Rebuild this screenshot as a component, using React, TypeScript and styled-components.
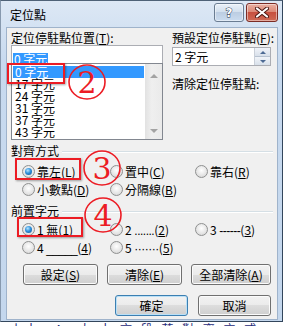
import * as React from "react"
import styled, { createGlobalStyle } from "styled-components"

const Global = createGlobalStyle`
  html, body { margin: 0; padding: 0; background: #fff; }
  body {
    font-family: "Noto Sans CJK TC", "Liberation Sans", sans-serif;
    font-size: 12px;
    color: #000;
  }
`

const Screen = styled.div`
  position: relative;
  width: 283px;
  height: 326px;
  overflow: hidden;
  background: #fff;
`

const Win = styled.div`
  height: 322px;
  box-sizing: border-box;
  display: flex;
  flex-direction: column;
  border-top: 1px solid #4f6277;
  border-left: 1px solid #8799ae;
  border-right: 1px solid #33465c;
  border-bottom: 1px solid #33465c;
  background: linear-gradient(#dde8f5, #c8daef 60px, #c4d7ed);
`

const TitleBar = styled.div`
  height: 26px;
  display: flex;
  align-items: flex-start;
  padding-left: 9px;
`

const Title = styled.div`
  margin-top: 6px;
  line-height: 16px;
  font-size: 12px;
`

const CaptionBtns = styled.div`
  margin-left: auto;
  margin-right: 4px;
  margin-top: 2px;
  display: flex;
  gap: 2px;
`

const CapBtn = styled.div<{ $close?: boolean }>`
  width: ${p => (p.$close ? 32 : 30)}px;
  height: 19px;
  box-sizing: border-box;
  border-radius: 3px;
  display: flex;
  align-items: center;
  justify-content: center;
  border: 1px solid ${p => (p.$close ? "#7b2c25" : "#6a7c92")};
  background: ${p =>
    p.$close
      ? "linear-gradient(#eab0a2, #dc8a78 45%, #c7503f 50%, #cf6a55)"
      : "linear-gradient(#eaf1f9, #d3e0ee 45%, #bccde2 50%, #cbdcef)"};
  box-shadow: inset 0 0 0 1px rgba(255, 255, 255, 0.45);
`

const Panel = styled.div`
  flex: 1;
  margin: 0 4px 1px 5px;
  background: #f0f0f0;
  border: 1px solid #9fb3cb;
  padding: 3px 4px 0 4px;
`

const Top = styled.div`
  display: grid;
  grid-template-columns: 152px 99px;
  column-gap: 9px;
`

const Col = styled.div`
  display: flex;
  flex-direction: column;
`

const Label = styled.div<{ $gap?: number }>`
  line-height: 14px;
  height: 14px;
  white-space: nowrap;
  margin-top: ${p => p.$gap ?? 0}px;
`

const EditBox = styled.div`
  height: 18px;
  box-sizing: border-box;
  border: 1px solid #abadb3;
  border-bottom: none;
  background: #fff;
  padding: 4px 0 0 1px;
`

const Sel = styled.span`
  display: inline-block;
  line-height: 11px;
  background: #3399ff;
  color: #fff;
  padding: 0 1px;
`

const ListBox = styled.div`
  height: 77px;
  box-sizing: border-box;
  border: 1px solid #828790;
  background: #fff;
  display: flex;
`

const Rows = styled.div`
  flex: 1;
  padding: 2px 1px 0 1px;
`

const Row = styled.div<{ $on?: boolean }>`
  height: 12px;
  line-height: 12px;
  padding-left: 2px;
  background: ${p => (p.$on ? "#3399ff" : "transparent")};
  color: ${p => (p.$on ? "#fff" : "#000")};
`

const ScrollBar = styled.div`
  width: 17px;
  background: linear-gradient(90deg, #e2e2e2, #efefef 40%, #eaeaea);
  display: flex;
  flex-direction: column;
  align-items: center;
  justify-content: space-between;
  padding: 10px 0 6px;
  box-sizing: border-box;
`

const Arrow = styled.div<{ $down?: boolean }>`
  width: 0;
  height: 0;
  border-left: 4px solid transparent;
  border-right: 4px solid transparent;
  ${p =>
    p.$down ? "border-top: 4px solid #a3a3a3;" : "border-bottom: 4px solid #a3a3a3;"}
`

const SpinBox = styled.div`
  margin-top: 2px;
  height: 19px;
  box-sizing: border-box;
  border: 1px solid #abadb3;
  background: #fff;
  display: flex;
`

const SpinText = styled.div`
  flex: 1;
  padding-left: 2px;
  line-height: 17px;
`

const SpinBtns = styled.div`
  width: 15px;
  display: flex;
  flex-direction: column;
  border-left: 1px solid #c9cfd8;
`

const SpinHalf = styled.div`
  flex: 1;
  display: flex;
  align-items: center;
  justify-content: center;
  background: linear-gradient(#f1f4f9, #d8e0ea);
  border-bottom: 1px solid #b7c2d0;
  &:last-child { border-bottom: none; }
`

const Tri = styled.div<{ $down?: boolean }>`
  width: 0;
  height: 0;
  border-left: 3px solid transparent;
  border-right: 3px solid transparent;
  ${p =>
    p.$down ? "border-top: 3px solid #4d6a93;" : "border-bottom: 3px solid #4d6a93;"}
`

const GroupHead = styled.div<{ $gap: number }>`
  display: flex;
  align-items: center;
  margin-top: ${p => p.$gap}px;
  height: 14px;
  line-height: 14px;
`

const Rule = styled.div`
  flex: 1;
  height: 1px;
  margin-left: 3px;
  background: #d5dfe5;
  box-shadow: 0 1px 0 #fff;
`

const RadioGrid = styled.div<{ $gap: number }>`
  display: grid;
  grid-template-columns: 88px 85px auto;
  grid-auto-rows: 18px;
  padding-left: 11px;
  margin-top: ${p => p.$gap}px;
`

const RadioItem = styled.div`
  display: flex;
  align-items: center;
  gap: 2px;
  white-space: nowrap;
`

const Circle = styled.div<{ $on?: boolean }>`
  width: 13px;
  height: 13px;
  box-sizing: border-box;
  border-radius: 50%;
  border: 1px solid #8f9090;
  background: radial-gradient(circle at 50% 40%, #ffffff, #e4e4e4 60%, #cfcfcf);
  display: flex;
  align-items: center;
  justify-content: center;
  &::after {
    content: "";
    display: ${p => (p.$on ? "block" : "none")};
    width: 7px;
    height: 7px;
    border-radius: 50%;
    background: radial-gradient(circle at 40% 35%, #b8e6ff, #2f91dc 45%, #0e4f8e);
  }
`

const Dots = styled.span`
  font-family: "Liberation Sans", sans-serif;
  letter-spacing: -0.5px;
`

const BtnRow = styled.div<{ $end?: boolean; $gap: number; $top: number }>`
  display: flex;
  gap: ${p => p.$gap}px;
  justify-content: ${p => (p.$end ? "flex-end" : "flex-start")};
  padding: 0 ${p => (p.$end ? 2 : 0)}px 0 ${p => (p.$end ? 0 : 12)}px;
  margin-top: ${p => p.$top}px;
`

const Btn = styled.div<{ $w: number; $def?: boolean }>`
  width: ${p => p.$w}px;
  height: 21px;
  box-sizing: border-box;
  border-radius: 3px;
  border: 1px solid ${p => (p.$def ? "#3c7fb1" : "#707070")};
  background: linear-gradient(#f2f2f2, #ebebeb 50%, #dddddd 50%, #cfcfcf);
  box-shadow: inset 0 0 0 1px ${p => (p.$def ? "#b9e0f7" : "#fbfbfb")};
  display: flex;
  align-items: center;
  justify-content: center;
  line-height: 14px;
`

const Doc = styled.div`
  height: 4px;
  overflow: hidden;
  padding-left: 10px;
  color: #1d2a78;
  line-height: 14px;
  letter-spacing: 3px;
`

const RedBox = styled.div<{ $x: number; $y: number; $w: number; $h: number }>`
  position: absolute;
  left: ${p => p.$x}px;
  top: ${p => p.$y}px;
  width: ${p => p.$w}px;
  height: ${p => p.$h}px;
  box-sizing: border-box;
  border: 2px solid #ec1c24;
  box-shadow: 1px 1px 2px rgba(0, 0, 0, 0.35);
`

const Mark = styled.svg<{ $x: number; $y: number }>`
  position: absolute;
  left: ${p => p.$x}px;
  top: ${p => p.$y}px;
  overflow: visible;
`

const Circled = ({ n, x, y }: { n: string; x: number; y: number }) => (
  <Mark $x={x} $y={y} width="38" height="36" viewBox="0 0 38 36">
    <ellipse cx="19" cy="18" rx="18" ry="17" fill="none" stroke="#ec1c24" strokeWidth="1.6" />
    <text
      x="19"
      y="29"
      textAnchor="middle"
      fontFamily="'DejaVu Serif', 'Liberation Serif', serif"
      fontSize="30"
      fill="#ec1c24"
    >
      {n}
    </text>
  </Mark>
)

const Radio = ({ on, children }: { on?: boolean; children: React.ReactNode }) => (
  <RadioItem>
    <Circle $on={on} />
    <span>{children}</span>
  </RadioItem>
)

const K = ({ c }: { c: string }) => (
  <>
    (<u>{c}</u>)
  </>
)

export default function App() {
  const stops = ["0 字元", "17 字元", "24 字元", "31 字元", "37 字元", "43 字元"]
  return (
    <Screen>
      <Global />
      <Win>
        <TitleBar>
          <Title>定位點</Title>
          <CaptionBtns>
            <CapBtn>
              <svg width="12" height="15" viewBox="0 0 12 15">
                <text
                  x="6"
                  y="12"
                  textAnchor="middle"
                  fontFamily="'DejaVu Sans', sans-serif"
                  fontWeight="bold"
                  fontSize="12"
                  fill="#fff"
                  stroke="#1f3048"
                  strokeWidth="0.9"
                  paintOrder="stroke"
                >
                  ?
                </text>
              </svg>
            </CapBtn>
            <CapBtn $close>
              <svg width="14" height="11" viewBox="0 0 14 11">
                <path d="M2 1.5 L12 9.5 M12 1.5 L2 9.5" stroke="#4a1610" strokeWidth="4" strokeLinecap="round" />
                <path d="M2 1.5 L12 9.5 M12 1.5 L2 9.5" stroke="#fff" strokeWidth="2.2" strokeLinecap="round" />
              </svg>
            </CapBtn>
          </CaptionBtns>
        </TitleBar>
        <Panel>
          <Top>
            <Col>
              <Label>
                定位停駐點位置<K c="T" />:
              </Label>
              <EditBox>
                <Sel>0 字元</Sel>
              </EditBox>
              <ListBox>
                <Rows>
                  {stops.map((s, i) => (
                    <Row key={s} $on={i === 0}>
                      {s}
                    </Row>
                  ))}
                </Rows>
                <ScrollBar>
                  <Arrow />
                  <Arrow $down />
                </ScrollBar>
              </ListBox>
            </Col>
            <Col>
              <Label>
                預設定位停駐點<K c="F" />:
              </Label>
              <SpinBox>
                <SpinText>2 字元</SpinText>
                <SpinBtns>
                  <SpinHalf>
                    <Tri />
                  </SpinHalf>
                  <SpinHalf>
                    <Tri $down />
                  </SpinHalf>
                </SpinBtns>
              </SpinBox>
              <Label $gap={11}>清除定位停駐點:</Label>
            </Col>
          </Top>

          <GroupHead $gap={4}>
            <span>對齊方式</span>
            <Rule />
          </GroupHead>
          <RadioGrid $gap={4}>
            <Radio on>
              靠左<K c="L" />
            </Radio>
            <Radio>
              置中<K c="C" />
            </Radio>
            <Radio>
              靠右<K c="R" />
            </Radio>
            <Radio>
              小數點<K c="D" />
            </Radio>
            <Radio>
              分隔線<K c="B" />
            </Radio>
          </RadioGrid>

          <GroupHead $gap={6}>
            <span>前置字元</span>
            <Rule />
          </GroupHead>
          <RadioGrid $gap={2}>
            <Radio on>
              1 無<K c="1" />
            </Radio>
            <Radio>
              2 <Dots>.......</Dots>
              <K c="2" />
            </Radio>
            <Radio>
              3 <Dots>------</Dots>
              <K c="3" />
            </Radio>
            <Radio>
              4 <Dots>_____</Dots>
              <K c="4" />
            </Radio>
            <Radio>
              5 <Dots>·······</Dots>
              <K c="5" />
            </Radio>
          </RadioGrid>

          <BtnRow $gap={9} $top={8}>
            <Btn $w={75}>
              設定<K c="S" />
            </Btn>
            <Btn $w={75}>
              清除<K c="E" />
            </Btn>
            <Btn $w={80}>
              全部清除<K c="A" />
            </Btn>
          </BtnRow>
          <BtnRow $end $gap={10} $top={10}>
            <Btn $w={73} $def>
              確定
            </Btn>
            <Btn $w={73}>取消</Btn>
          </BtnRow>
        </Panel>
      </Win>
      <Doc>小十·Ar 大 十 文 段 落 對 齊 方 式</Doc>

      <RedBox $x={7} $y={63} $w={58} $h={21} />
      <RedBox $x={15} $y={158} $w={66} $h={22} />
      <RedBox $x={17} $y={217} $w={66} $h={20} />
      <Circled n="2" x={68} y={64} />
      <Circled n="3" x={83} y={150} />
      <Circled n="4" x={84} y={197} />
    </Screen>
  )
}
